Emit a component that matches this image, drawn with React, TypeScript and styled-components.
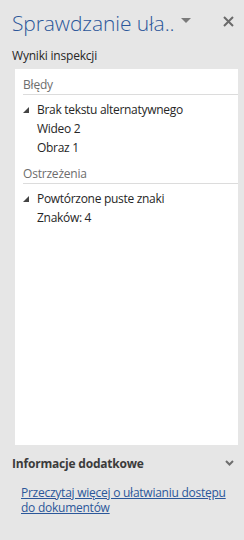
import styled, { createGlobalStyle } from "styled-components";

const GlobalStyle = createGlobalStyle`
  html, body {
    margin: 0;
    padding: 0;
    background: #e6e6e6;
  }
  body {
    font-family: "Segoe UI", "Open Sans", "Noto Sans", sans-serif;
  }
`;

const Pane = styled.div`
  width: 244px;
  height: 540px;
  background: #e6e6e6;
  box-sizing: border-box;
  display: flex;
  flex-direction: column;
  overflow: hidden;
`;

const Header = styled.div`
  display: flex;
  align-items: center;
  height: 42px;
  padding: 0 10px 0 12px;
  box-sizing: border-box;
`;

const Title = styled.div`
  flex: 1;
  font-size: 21px;
  font-weight: 300;
  color: #2b579a;
  white-space: nowrap;
  letter-spacing: -0.1px;
  padding-top: 4px;
`;

const IconButton = styled.div<{ $ml?: number }>`
  display: flex;
  align-items: center;
  justify-content: center;
  margin-left: ${(p) => p.$ml ?? 0}px;
`;

const SectionLabel = styled.div`
  font-size: 12px;
  color: #262626;
  letter-spacing: -0.2px;
  padding: 5px 0 0 12px;
  height: 20px;
  box-sizing: border-box;
`;

const ResultsBox = styled.div`
  margin: 7px 6px 0 15px;
  height: 376px;
  background: #ffffff;
  padding: 6px 0 0 8px;
  box-sizing: border-box;
`;

const GroupTitle = styled.div`
  font-size: 12px;
  color: #6d6d6d;
  letter-spacing: -0.2px;
  height: 19px;
  line-height: 19px;
  border-bottom: 1px solid #dcdcdc;
  margin-bottom: 5px;
`;

const Item = styled.div<{ $indent?: boolean }>`
  display: flex;
  align-items: center;
  height: 19px;
  font-size: 12px;
  color: #262626;
  letter-spacing: -0.3px;
  padding-left: ${(p) => (p.$indent ? 14 : 0)}px;
  white-space: nowrap;
`;

const Caret = styled.span`
  width: 14px;
  display: inline-flex;
  align-items: center;
`;

const Group = styled.div`
  margin-bottom: 7px;
`;

const InfoHeader = styled.div`
  display: flex;
  align-items: center;
  justify-content: space-between;
  padding: 9px 10px 0 12px;
  height: 27px;
  box-sizing: border-box;
`;

const InfoTitle = styled.div`
  font-size: 12px;
  font-weight: 700;
  color: #3b3b3b;
  letter-spacing: -0.2px;
`;

const LinkText = styled.a`
  display: block;
  margin: 13px 4px 0 21px;
  font-size: 12px;
  line-height: 15px;
  letter-spacing: -0.25px;
  color: #2b579a;
  text-decoration: underline;
`;

const TriangleDown = () => (
  <svg width="10" height="6" viewBox="0 0 10 6">
    <path d="M0 0 H10 L5 5 Z" fill="#7a7a7a" />
  </svg>
);

const CloseIcon = () => (
  <svg width="11" height="11" viewBox="0 0 11 11">
    <path d="M1 1 L10 10 M10 1 L1 10" stroke="#6a6a6a" strokeWidth="2" />
  </svg>
);

const ExpandedCaret = () => (
  <svg width="6" height="6" viewBox="0 0 6 6">
    <path d="M6 0 V6 H0 Z" fill="#444444" />
  </svg>
);

const Chevron = () => (
  <svg width="9" height="6" viewBox="0 0 9 6">
    <path d="M1 1 L4.5 4.5 L8 1" stroke="#6e6e6e" strokeWidth="2" fill="none" />
  </svg>
);

const groups = [
  {
    title: "Błędy",
    rule: "Brak tekstu alternatywnego",
    items: ["Wideo 2", "Obraz 1"],
  },
  {
    title: "Ostrzeżenia",
    rule: "Powtórzone puste znaki",
    items: ["Znaków: 4"],
  },
];

export default function App() {
  return (
    <>
      <GlobalStyle />
      <Pane>
        <Header>
          <Title>Sprawdzanie uła..</Title>
          <IconButton>
            <TriangleDown />
          </IconButton>
          <IconButton $ml={32}>
            <CloseIcon />
          </IconButton>
        </Header>
        <SectionLabel>Wyniki inspekcji</SectionLabel>
        <ResultsBox>
          {groups.map((g) => (
            <Group key={g.title}>
              <GroupTitle>{g.title}</GroupTitle>
              <Item>
                <Caret>
                  <ExpandedCaret />
                </Caret>
                {g.rule}
              </Item>
              {g.items.map((it) => (
                <Item $indent key={it}>
                  {it}
                </Item>
              ))}
            </Group>
          ))}
        </ResultsBox>
        <InfoHeader>
          <InfoTitle>Informacje dodatkowe</InfoTitle>
          <Chevron />
        </InfoHeader>
        <LinkText href="#">
          Przeczytaj więcej o ułatwianiu dostępu do dokumentów
        </LinkText>
      </Pane>
    </>
  );
}
